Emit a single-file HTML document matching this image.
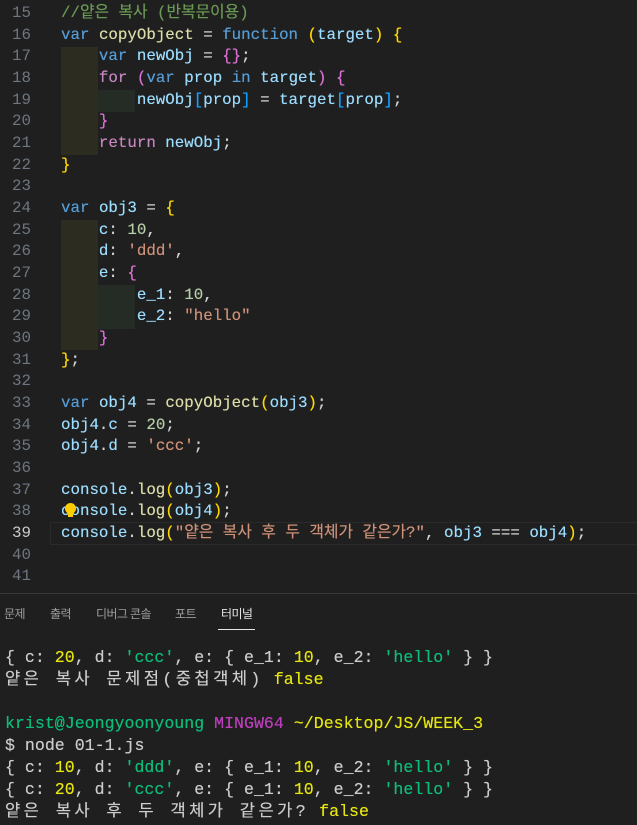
<!DOCTYPE html>
<html><head><meta charset="utf-8"><style>
body{margin:0;width:637px;height:825px;background:#1f1f1f;overflow:hidden;position:relative;font-family:"Liberation Mono","Noto Sans CJK KR",monospace}
.w{position:absolute;left:0;top:1.5px;width:637px;height:590px}
.ln{position:absolute;left:0;width:31px;text-align:right;color:#6e7681;font-size:15.8px;line-height:21.65px;height:21.65px}
.cl{position:absolute;left:61px;white-space:pre;color:#d4d4d4;font-size:15.8px;line-height:21.65px;height:21.65px;text-shadow:0 0 0.4px currentColor}
.g1{position:absolute;left:61px;width:37px;background:#2d2c20}
.g2{position:absolute;left:98px;width:37px;background:#252b25}
.k{color:#569cd6}.f{color:#dcdcaa}.v{color:#9cdcfe}.c{color:#c586c0}.s{color:#ce9178}.n{color:#b5cea8}.cm{color:#6a9955}
.y{color:#ffd700}.p{color:#da70d6}.b{color:#179fff}
.t{position:absolute;left:5px;white-space:pre;color:#cccccc;font-size:16.6px;line-height:22px;text-shadow:0 0 0.4px currentColor}
.tg{color:#0dbc79}.ty{color:#e5e510}.tm{color:#bc3fbc}
.ko{letter-spacing:3.4px}
.tab{position:absolute;top:605px;font-family:"Liberation Sans","Noto Sans CJK KR",sans-serif;font-size:12px;letter-spacing:-0.6px;color:#9d9d9d;white-space:nowrap}
</style></head><body>
<div class="w">
<div class="g1" style="top:45px;height:108px"></div>
<div class="g2" style="top:88px;height:22px"></div>
<div class="g1" style="top:218px;height:130px"></div>
<div class="g2" style="top:283px;height:44px"></div>
<div style="position:absolute;left:50px;right:0;top:520px;height:21px;border:1px solid #2a2a2a;border-right:none"></div>

<div class="ln" style="top:1px">15</div><div class="cl" style="top:1px"><span class="cm">//얕은 복사 (반복문이용)</span></div>
<div class="ln" style="top:23px">16</div><div class="cl" style="top:23px"><span class="k">var</span> <span class="f">copyObject</span> = <span class="k">function</span> <span class="y">(</span><span class="v">target</span><span class="y">)</span> <span class="y">{</span></div>
<div class="ln" style="top:44px">17</div><div class="cl" style="top:44px">    <span class="k">var</span> <span class="v">newObj</span> = <span class="p">{}</span>;</div>
<div class="ln" style="top:66px">18</div><div class="cl" style="top:66px">    <span class="c">for</span> <span class="p">(</span><span class="k">var</span> <span class="v">prop</span> <span class="k">in</span> <span class="v">target</span><span class="p">)</span> <span class="p">{</span></div>
<div class="ln" style="top:88px">19</div><div class="cl" style="top:88px">        <span class="v">newObj</span><span class="b">[</span><span class="v">prop</span><span class="b">]</span> = <span class="v">target</span><span class="b">[</span><span class="v">prop</span><span class="b">]</span>;</div>
<div class="ln" style="top:109px">20</div><div class="cl" style="top:109px">    <span class="p">}</span></div>
<div class="ln" style="top:131px">21</div><div class="cl" style="top:131px">    <span class="c">return</span> <span class="v">newObj</span>;</div>
<div class="ln" style="top:153px">22</div><div class="cl" style="top:153px"><span class="y">}</span></div>
<div class="ln" style="top:174px">23</div>
<div class="ln" style="top:196px">24</div><div class="cl" style="top:196px"><span class="k">var</span> <span class="v">obj3</span> = <span class="y">{</span></div>
<div class="ln" style="top:218px">25</div><div class="cl" style="top:218px">    <span class="v">c</span>: <span class="n">10</span>,</div>
<div class="ln" style="top:239px">26</div><div class="cl" style="top:239px">    <span class="v">d</span>: <span class="s">'ddd'</span>,</div>
<div class="ln" style="top:261px">27</div><div class="cl" style="top:261px">    <span class="v">e</span>: <span class="p">{</span></div>
<div class="ln" style="top:283px">28</div><div class="cl" style="top:283px">        <span class="v">e_1</span>: <span class="n">10</span>,</div>
<div class="ln" style="top:304px">29</div><div class="cl" style="top:304px">        <span class="v">e_2</span>: <span class="s">"hello"</span></div>
<div class="ln" style="top:326px">30</div><div class="cl" style="top:326px">    <span class="p">}</span></div>
<div class="ln" style="top:348px">31</div><div class="cl" style="top:348px"><span class="y">}</span>;</div>
<div class="ln" style="top:369px">32</div>
<div class="ln" style="top:391px">33</div><div class="cl" style="top:391px"><span class="k">var</span> <span class="v">obj4</span> = <span class="f">copyObject</span><span class="y">(</span><span class="v">obj3</span><span class="y">)</span>;</div>
<div class="ln" style="top:413px">34</div><div class="cl" style="top:413px"><span class="v">obj4</span>.<span class="v">c</span> = <span class="n">20</span>;</div>
<div class="ln" style="top:434px">35</div><div class="cl" style="top:434px"><span class="v">obj4</span>.<span class="v">d</span> = <span class="s">'ccc'</span>;</div>
<div class="ln" style="top:456px">36</div>
<div class="ln" style="top:478px">37</div><div class="cl" style="top:478px"><span class="v">console</span>.<span class="f">log</span><span class="y">(</span><span class="v">obj3</span><span class="y">)</span>;</div>
<div class="ln" style="top:499px">38</div><div class="cl" style="top:499px"><span class="v">console</span>.<span class="f">log</span><span class="y">(</span><span class="v">obj4</span><span class="y">)</span>;</div>
<div style="position:absolute;left:65px;top:501px;width:11px;height:11px;border-radius:50%;background:#ffcc00"></div>
<div style="position:absolute;left:68px;top:511px;width:5px;height:4px;background:#ffcc00"></div>
<div class="ln" style="top:521px;color:#cccccc">39</div><div class="cl" style="top:521px"><span class="v">console</span>.<span class="f">log</span><span class="y">(</span><span class="s">"얕은 복사 후 두 객체가 같은가?"</span>, <span class="v">obj3</span> === <span class="v">obj4</span><span class="y">)</span>;</div>
<div class="ln" style="top:543px">40</div>
<div class="ln" style="top:564px">41</div>
</div>

<div style="position:absolute;left:0;right:0;top:593px;height:1px;background:#3a3a3a"></div>
<div class="tab" style="left:4px">문제</div>
<div class="tab" style="left:50px">출력</div>
<div class="tab" style="left:96px">디버그 콘솔</div>
<div class="tab" style="left:175px">포트</div>
<div class="tab" style="left:221px;color:#e7e7e7">터미널</div>
<div style="position:absolute;left:218px;top:629px;width:37px;height:1px;background:#e7e7e7"></div>

<div class="t" style="top:647px">{ c: <span class="ty">20</span>, d: <span class="tg">'ccc'</span>, e: { e_1: <span class="ty">10</span>, e_2: <span class="tg">'hello'</span> } }</div>
<div class="t" style="top:669px"><span class="ko">얕은 복사 문제점(중첩객체)</span> <span class="ty">false</span></div>
<div class="t" style="top:713px"><span class="tg">krist@Jeongyoonyoung</span> <span class="tm">MINGW64</span> <span class="ty">~/Desktop/JS/WEEK_3</span></div>
<div class="t" style="top:735px">$ node 01-1.js</div>
<div class="t" style="top:757px">{ c: <span class="ty">10</span>, d: <span class="tg">'ddd'</span>, e: { e_1: <span class="ty">10</span>, e_2: <span class="tg">'hello'</span> } }</div>
<div class="t" style="top:779px">{ c: <span class="ty">20</span>, d: <span class="tg">'ccc'</span>, e: { e_1: <span class="ty">10</span>, e_2: <span class="tg">'hello'</span> } }</div>
<div class="t" style="top:801px"><span class="ko">얕은 복사 후 두 객체가 같은가?</span> <span class="ty">false</span></div>
</body></html>
